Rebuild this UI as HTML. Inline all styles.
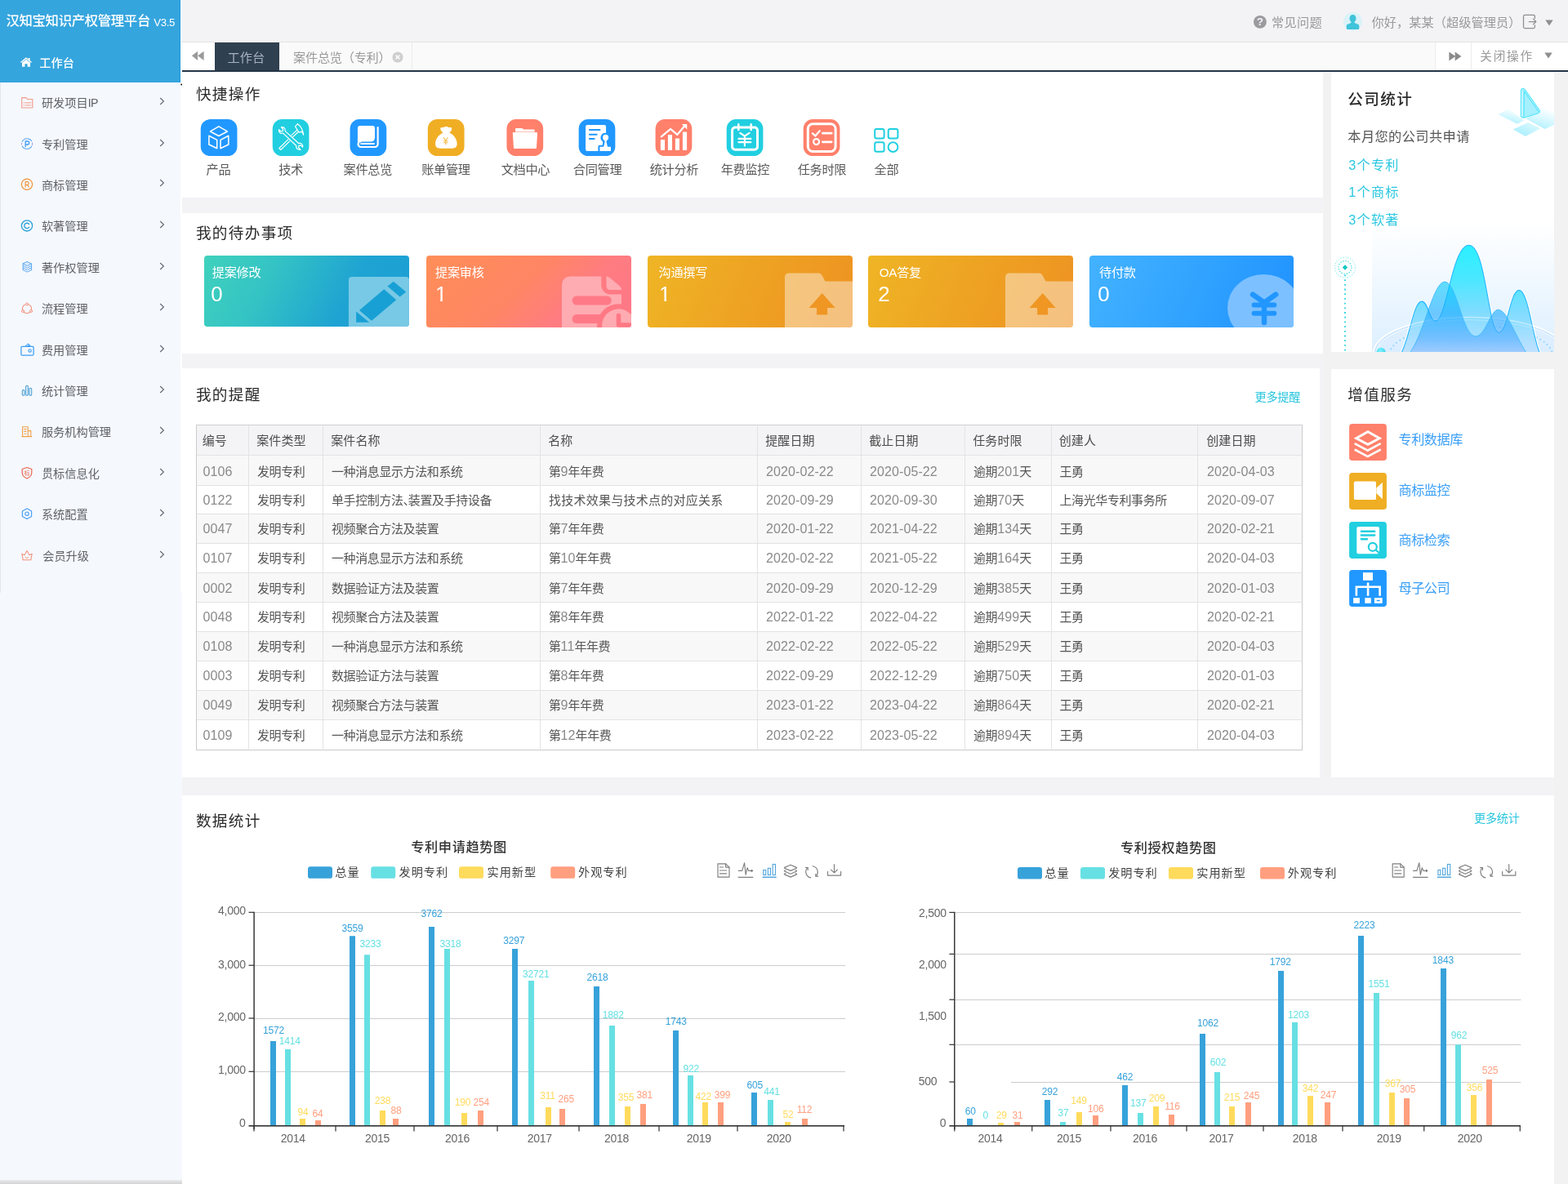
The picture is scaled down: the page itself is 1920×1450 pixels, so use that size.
<!DOCTYPE html>
<html lang="zh-CN">
<head>
<meta charset="utf-8">
<title>汉知宝知识产权管理平台 V3.5</title>
<style>
html,body{margin:0;padding:0}
body{width:1920px;height:1450px;overflow:hidden;background:#f2f2f3;position:relative;}
#app{position:absolute;left:0;top:0;width:1920px;height:1450px;overflow:hidden;will-change:transform;font-family:"Liberation Sans","Noto Sans CJK SC",sans-serif;color:#555;font-size:14px}
.a{position:absolute}
.t{position:absolute;white-space:nowrap;line-height:1;margin:0;padding:0;font-weight:400}
svg{position:absolute;overflow:visible}
ul{list-style:none;margin:0;padding:0}
a{text-decoration:none;color:inherit}
h1,h2,h3,p{margin:0;padding:0;font-weight:400}

.tb{border-collapse:separate;border-spacing:0;table-layout:fixed;border-left:1px solid #cbcbcb;border-top:1px solid #cfcfcf;font-size:15px;color:#555;box-sizing:border-box}
.tb th,.tb td{box-sizing:border-box;border-right:1px solid #e3e3e3;border-bottom:1px solid #e3e3e3;padding:0 0 0 10px;text-align:left;font-weight:400;white-space:nowrap;overflow:hidden;line-height:20px;letter-spacing:-0.400px}
.tb th{background:#f4f4f6;color:#4d4d4d;letter-spacing:0.100px;padding-top:2px;text-indent:-0.800px}
.tb td{padding-top:3px}
.tb tr.odd td{background:#f8f8f9}
.tb th:last-child,.tb td:last-child{border-right:1px solid #cbcbcb}
.tb tbody tr:last-child td{border-bottom:1px solid #cbcbcb}
.tb .n{font-size:16px;color:#8a8a8a;letter-spacing:0.100px}
</style>
</head>
<body>
<div id="app">
<nav class="a" style="left:0;top:0;width:223px;height:1450px">
<div class="a" style="left:0px;top:0px;width:221px;height:726px;background:#f5f8fd;"></div>
<div class="a" style="left:221px;top:0px;width:2px;height:726px;background:#fff;"></div>
<div class="a" style="left:0px;top:726px;width:223px;height:724px;background:#f5f8fd;"></div>
<div class="a" style="left:0px;top:101px;width:1px;height:625px;background:#e3e8f0;"></div>
<div class="a" style="left:0px;top:1445px;width:223px;height:5px;background:linear-gradient(#e9ebee,#d2d2d2);"></div>
<div class="a" style="left:0px;top:0px;width:221px;height:101px;background:#35a5de;"></div>
<div class="a" style="left:220px;top:0px;width:1px;height:101px;background:#2198da;"></div>
<svg class="a" style="left:221px;top:102px" width="4" height="4" viewBox="0 0 4 4" ><g><circle cx="1.150" cy="1.550" r=".95" fill="#111"/></g></svg>
<h1 class="t" style="left:7.5px;top:17.30px;font-size:16.4px;color:#fff;letter-spacing:-0.35px;font-weight:500;">汉知宝知识产权管理平台 <span style="font-size:13.200px;letter-spacing:-0.300px;position:relative;top:0.500px;font-weight:400">V3.5</span></h1>
<svg class="a" style="left:24px;top:69px" width="16" height="14" viewBox="0 0 16 14"><path d="M8 1.2L1 7.1l.8.9L8 2.900l6.200 5.100.800-.900-2.400-2V2h-1.800v1.600z" fill="#fff"/><path d="M3 7.700L8 3.700l5 4v5.100H9.600V9.300H6.400v3.500H3z" fill="#fff"/></svg>
<a class="t" style="left:48.3px;top:70.20px;font-size:14.2px;color:#fff;font-weight:500;">工作台</a>
<ul>
<li>
<svg class="a" style="left:25px;top:117px" width="18" height="18" viewBox="0 0 18 18" fill="none" stroke-linecap="round" stroke-linejoin="round"><g transform="translate(0.00 0.20)"><path d="M1.700 2.400h5.400l1.600 1.900h6.100v10.500H1.700z" stroke="#f4978a" stroke-width="1.100" fill="none"/><path d="M4.100 8.700h.9M6.600 8.700h6M4.100 11.600h.9M6.600 11.600h6" stroke="#f5a99c" stroke-width="1.200"/></g></svg>
<a class="t" style="left:50.9px;top:118.90px;font-size:14.2px;color:#606266;">研发项目<span style="letter-spacing:-0.700px">IP</span></a>
<svg class="a" style="left:194px;top:117.8px" width="10" height="12" viewBox="0 0 10 12"><path d="M2.200 2l4.200 4-4.200 4" fill="none" stroke="#5f6675" stroke-width="1.1"/></svg>
</li>
<li>
<svg class="a" style="left:25px;top:168px" width="18" height="18" viewBox="0 0 18 18" fill="none" stroke-linecap="round" stroke-linejoin="round"><g transform="translate(0.00 0.20)"><path d="M13.6 4.4A6.6 6.6 0 0 0 2.2 5.2M2.2 10.8a6.6 6.6 0 0 0 11.6 0" stroke="#5aa9f6" stroke-width="1.1"/><path d="M1.6 7.2v1.6M14.6 6.6v2.6" stroke="#8e9bf0" stroke-width="1"/><path d="M6.2 11.4V4.8h2.5a2 2 0 0 1 0 4H6.2" stroke="#3f9cf4" stroke-width="1.3"/></g></svg>
<a class="t" style="left:50.9px;top:169.90px;font-size:14.2px;color:#606266;">专利管理</a>
<svg class="a" style="left:194px;top:168.8px" width="10" height="12" viewBox="0 0 10 12"><path d="M2.200 2l4.200 4-4.200 4" fill="none" stroke="#5f6675" stroke-width="1.1"/></svg>
</li>
<li>
<svg class="a" style="left:25px;top:217px" width="18" height="18" viewBox="0 0 18 18" fill="none" stroke-linecap="round" stroke-linejoin="round"><g transform="translate(0.00 0.80)"><circle cx="8" cy="8" r="6.6" stroke="#f0953d" stroke-width="1.2"/><path d="M6.1 11.2V4.9h2.3a1.8 1.8 0 0 1 0 3.6H6.1M8.4 8.5l1.9 2.7" stroke="#f0953d" stroke-width="1.2"/></g></svg>
<a class="t" style="left:50.9px;top:219.50px;font-size:14.2px;color:#606266;">商标管理</a>
<svg class="a" style="left:194px;top:218.4px" width="10" height="12" viewBox="0 0 10 12"><path d="M2.200 2l4.200 4-4.200 4" fill="none" stroke="#5f6675" stroke-width="1.1"/></svg>
</li>
<li>
<svg class="a" style="left:25px;top:268px" width="18" height="18" viewBox="0 0 18 18" fill="none" stroke-linecap="round" stroke-linejoin="round"><g transform="translate(0.00 0.40)"><circle cx="8" cy="8" r="6.6" stroke="#2a9fd8" stroke-width="1.3"/><path d="M10.6 6.1a3.2 3.2 0 1 0 0 3.8" stroke="#2a9fd8" stroke-width="1.4"/></g></svg>
<a class="t" style="left:50.9px;top:270.10px;font-size:14.2px;color:#606266;">软著管理</a>
<svg class="a" style="left:194px;top:269px" width="10" height="12" viewBox="0 0 10 12"><path d="M2.200 2l4.200 4-4.200 4" fill="none" stroke="#5f6675" stroke-width="1.1"/></svg>
</li>
<li>
<svg class="a" style="left:25px;top:318px" width="18" height="18" viewBox="0 0 18 18" fill="none" stroke-linecap="round" stroke-linejoin="round"><g transform="translate(0.00 0.90)"><path d="M8.400 1.700l5.200 2.500-5.200 2.500-5.200-2.500z" stroke="#5ea8f2" stroke-width="1" fill="#d9eafc"/><path d="M3.200 6.700l5.200 2.500 5.200-2.500M3.200 9.200l5.200 2.500 5.200-2.500M3.200 11.700l5.200 2.500 5.200-2.500M3.200 4.200v7.500M13.600 4.200v7.500" stroke="#5ea8f2" stroke-width="1"/></g></svg>
<a class="t" style="left:50.9px;top:320.60px;font-size:14.2px;color:#606266;">著作权管理</a>
<svg class="a" style="left:194px;top:319.5px" width="10" height="12" viewBox="0 0 10 12"><path d="M2.200 2l4.200 4-4.200 4" fill="none" stroke="#5f6675" stroke-width="1.1"/></svg>
</li>
<li>
<svg class="a" style="left:25px;top:369px" width="18" height="18" viewBox="0 0 18 18" fill="none" stroke-linecap="round" stroke-linejoin="round"><g transform="translate(0.00 0.50)"><circle cx="8" cy="8.6" r="5.6" stroke="#f3927f" stroke-width="1.1"/><circle cx="8" cy="2.9" r="1.5" fill="#f5f8fd" stroke="#f3927f" stroke-width="1"/><circle cx="3" cy="11.4" r="1.5" fill="#f5f8fd" stroke="#f3927f" stroke-width="1"/><circle cx="13" cy="11.4" r="1.5" fill="#f5f8fd" stroke="#f3927f" stroke-width="1"/></g></svg>
<a class="t" style="left:50.9px;top:371.20px;font-size:14.2px;color:#606266;">流程管理</a>
<svg class="a" style="left:194px;top:370.1px" width="10" height="12" viewBox="0 0 10 12"><path d="M2.200 2l4.200 4-4.200 4" fill="none" stroke="#5f6675" stroke-width="1.1"/></svg>
</li>
<li>
<svg class="a" style="left:25px;top:420px" width="18" height="18" viewBox="0 0 18 18" fill="none" stroke-linecap="round" stroke-linejoin="round"><g transform="translate(0.00 0.20)"><path d="M5.600 4.200L9.400.900l3.200 3.300M8.200 4.200l3-2.100" stroke="#4aa6f6" stroke-width="1.100"/><rect x=".9" y="4.200" width="15.200" height="10.600" rx="1.200" stroke="#3a9ff5" stroke-width="1.250"/><circle cx="11.600" cy="9.200" r="1.700" stroke="#3a9ff5" stroke-width="1.100"/></g></svg>
<a class="t" style="left:50.9px;top:421.90px;font-size:14.2px;color:#606266;">费用管理</a>
<svg class="a" style="left:194px;top:420.8px" width="10" height="12" viewBox="0 0 10 12"><path d="M2.200 2l4.200 4-4.200 4" fill="none" stroke="#5f6675" stroke-width="1.1"/></svg>
</li>
<li>
<svg class="a" style="left:25px;top:470px" width="18" height="18" viewBox="0 0 18 18" fill="none" stroke-linecap="round" stroke-linejoin="round"><g transform="translate(0.00 0.20)"><rect x="2.3" y="7.4" width="2.7" height="6.6" rx="1.3" stroke="#4a9fd6" stroke-width="1.1"/><rect x="6.65" y="2" width="2.7" height="12" rx="1.3" stroke="#4a9fd6" stroke-width="1.1"/><rect x="11" y="5" width="2.7" height="9" rx="1.3" stroke="#4a9fd6" stroke-width="1.1"/></g></svg>
<a class="t" style="left:50.9px;top:471.90px;font-size:14.2px;color:#606266;">统计管理</a>
<svg class="a" style="left:194px;top:470.8px" width="10" height="12" viewBox="0 0 10 12"><path d="M2.200 2l4.200 4-4.200 4" fill="none" stroke="#5f6675" stroke-width="1.1"/></svg>
</li>
<li>
<svg class="a" style="left:25px;top:520px" width="18" height="18" viewBox="0 0 18 18" fill="none" stroke-linecap="round" stroke-linejoin="round"><g transform="translate(0.00 0.40)"><path d="M2.6 14V2.4h6.6V14M9.2 7.2h3.6V14M1.8 14.2h12" stroke="#f0a047" stroke-width="1.1"/><path d="M4.8 5.2h2.2M4.8 8h2.2M4.8 10.8h2.2" stroke="#f0a047" stroke-width="1.1"/></g></svg>
<a class="t" style="left:50.9px;top:522.10px;font-size:14.2px;color:#606266;">服务机构管理</a>
<svg class="a" style="left:194px;top:521px" width="10" height="12" viewBox="0 0 10 12"><path d="M2.200 2l4.200 4-4.200 4" fill="none" stroke="#5f6675" stroke-width="1.1"/></svg>
</li>
<li>
<svg class="a" style="left:25px;top:571px" width="18" height="18" viewBox="0 0 18 18" fill="none" stroke-linecap="round" stroke-linejoin="round"><g transform="translate(0.00 0.20)"><path d="M8 1.3l5.8 2v4.5c0 3.4-2.6 5.6-5.8 7-3.2-1.4-5.8-3.6-5.8-7V3.300z" stroke="#ea6650" stroke-width="1.2"/></g></svg>
<span class="t" style="left:29.4px;top:575.50px;font-size:7px;color:#ea6650;">标</span>
<a class="t" style="left:50.9px;top:572.90px;font-size:14.2px;color:#606266;">贯标信息化</a>
<svg class="a" style="left:194px;top:571.8px" width="10" height="12" viewBox="0 0 10 12"><path d="M2.200 2l4.200 4-4.200 4" fill="none" stroke="#5f6675" stroke-width="1.1"/></svg>
</li>
<li>
<svg class="a" style="left:25px;top:621px" width="18" height="18" viewBox="0 0 18 18" fill="none" stroke-linecap="round" stroke-linejoin="round"><g transform="translate(0.00 0.20)"><path d="M8 1.6l5.6 3.2v6.4L8 14.4l-5.6-3.2V4.8z" stroke="#4aa0f5" stroke-width="1.2"/><circle cx="8" cy="8" r="2.2" stroke="#4aa0f5" stroke-width="1.2"/></g></svg>
<a class="t" style="left:50.9px;top:622.90px;font-size:14.2px;color:#606266;">系统配置</a>
<svg class="a" style="left:194px;top:621.8px" width="10" height="12" viewBox="0 0 10 12"><path d="M2.200 2l4.200 4-4.200 4" fill="none" stroke="#5f6675" stroke-width="1.1"/></svg>
</li>
<li>
<svg class="a" style="left:25px;top:672px" width="18" height="17" viewBox="0 0 18 17" fill="none" stroke-linecap="round" stroke-linejoin="round"><g><path d="M1.8 6.2l3.2 1.6L8 2.6l3 5.200 3.200-1.600-1.400 7.600H3.200z" stroke="#f3937f" stroke-width="1.1"/><path d="M6.4 10.400l1.600 1.400 1.600-1.400" stroke="#f3937f" stroke-width="1"/></g></svg>
<a class="t" style="left:52.2px;top:673.70px;font-size:14.2px;color:#606266;">会员升级</a>
<svg class="a" style="left:194px;top:672.6px" width="10" height="12" viewBox="0 0 10 12"><path d="M2.200 2l4.200 4-4.200 4" fill="none" stroke="#5f6675" stroke-width="1.1"/></svg>
</li>
</ul></nav>
<header class="a" style="left:223px;top:0;width:1697px;height:88px">
</header>
<div class="a" style="left:223px;top:0px;width:1697px;height:51px;background:#f3f3f5;"></div>
<div class="a" style="left:223px;top:51px;width:1697px;height:1px;background:#e4e4e5;"></div>
<svg class="a" style="left:1534px;top:18px" width="18" height="18" viewBox="0 0 18 18" ><g transform="translate(0.90 0.90)"><circle cx="8" cy="8" r="7.900" fill="#9b9a9e"/></g></svg>
<span class="t" style="left:1538.8px;top:19.95px;font-size:13.5px;color:#f3f3f5;font-weight:700;">?</span>
<a class="t" style="left:1557.1px;top:19.60px;font-size:15.2px;color:#9a9a9c;letter-spacing:0.250px;">常见问题</a>
<svg class="a" style="left:1645px;top:14px" width="24" height="25" viewBox="0 0 24 25" ><g transform="translate(0.00 0.90)"><circle cx="11.500" cy="11.500" r="11.500" fill="#dbf3f8"/><path d="M11.500 3.100c2.400 0 4 1.900 4 4.600 0 1.900-.800 3.500-1.900 4.400-.300.300-.300.900.100 1.100l4 1.700c1 .400 1.600 1.100 1.600 2.100v2.600c0 .900-.600 1.500-1.500 1.500H5.200c-.900 0-1.500-.600-1.500-1.500v-2.600c0-1 .600-1.700 1.600-2.100l4-1.700c.400-.200.400-.800.100-1.100-1.100-.900-1.900-2.500-1.900-4.400 0-2.700 1.600-4.600 4-4.600z" fill="#3fc4db"/></g></svg>
<span class="t" style="left:1679.5px;top:19.60px;font-size:15.2px;color:#9a9a9c;letter-spacing:0.070px;">你好，某某（超级管理员）</span>
<svg class="a" style="left:1864px;top:17px" width="19" height="19" viewBox="1864 17 19 19" fill="none" stroke="#8f8f92" stroke-width="1.250" stroke-linejoin="round" stroke-linecap="round"><path d="M1879.400 22.400V19.900a1.500 1.500 0 0 0-1.500-1.500H1867a1.500 1.500 0 0 0-1.500 1.500v13.200a1.500 1.500 0 0 0 1.500 1.500h10.900a1.500 1.500 0 0 0 1.500-1.500V30.800"/><path d="M1872.300 26.500h8.200M1877.400 23.100l3.400 3.400-3.400 3.400"/></svg>
<svg class="a" style="left:1891.500px;top:23.500px" width="10" height="8" viewBox="0 0 10 8"><path d="M0.300 0.500h9.400L5 7.600z" fill="#8f8f92"/></svg>
<div class="a" style="left:223px;top:52px;width:1697px;height:34px;background:#fafafa;"></div>
<div class="a" style="left:223px;top:86px;width:1697px;height:2px;background:#243447;"></div>
<div class="a" style="left:223px;top:52px;width:40px;height:34px;background:#fff;"></div>
<svg class="a" style="left:234px;top:62px" width="17" height="13" viewBox="0 0 17 13"><path d="M8.100 0.700v11.200L0.900 6.300zM15.600 0.700v11.200L8.200 6.300z" fill="#9a9a9a"/></svg>
<div class="a" style="left:263px;top:52px;width:79px;height:34px;background:#2f4050;"></div>
<a class="t" style="left:278.5px;top:62.80px;font-size:15.2px;color:#a7b1c2;">工作台</a>
<a class="t" style="left:359.1px;top:62.80px;font-size:15.2px;color:#999;letter-spacing:-0.270px;">案件总览（专利）</a>
<svg class="a" style="left:479.500px;top:62.800px" width="14" height="14" viewBox="0 0 14 14"><circle cx="7" cy="7" r="6.600" fill="#cfcfcf"/><path d="M4.600 4.600l4.800 4.800M9.400 4.600l-4.800 4.800" stroke="#fafafa" stroke-width="1.500"/></svg>
<div class="a" style="left:504px;top:52px;width:1px;height:34px;background:#ececec;"></div>
<div class="a" style="left:1757px;top:52px;width:163px;height:34px;background:#fff;"></div>
<div class="a" style="left:1757px;top:52px;width:1px;height:34px;background:#ececec;"></div>
<div class="a" style="left:1801px;top:52px;width:1px;height:34px;background:#ececec;"></div>
<svg class="a" style="left:1773.500px;top:62.500px" width="16" height="12" viewBox="0 0 16 12"><path d="M0.400 0.400v11.200L8.200 6zM7.600 0.400v11.200L15.400 6z" fill="#8a8a8a"/></svg>
<a class="t" style="left:1812.3px;top:62.00px;font-size:14.6px;color:#999;letter-spacing:1.800px;">关闭操作</a>
<svg class="a" style="left:1891px;top:63.500px" width="10" height="8" viewBox="0 0 10 8"><path d="M0.300 0.500h9.400L5 7.600z" fill="#8f8f92"/></svg>
<main>
<div class="a" style="left:223px;top:88px;width:1397px;height:886px;background:#f3f3f6;"></div>
<div class="a" style="left:223px;top:952px;width:1680px;height:22px;background:#f3f3f5;"></div>
<section class="a" style="left:223px;top:88px;width:1397px;height:154px;background:#fff"></section>
<h2 class="t" style="left:239.9px;top:107.00px;font-size:18.6px;color:#2b2b2b;letter-spacing:1.350px;">快捷操作</h2>
<svg class="a" style="left:245px;top:146px" width="47" height="47" viewBox="0 0 47 47" fill="none" stroke-linecap="round" stroke-linejoin="round"><g transform="translate(0.75 0.10)"><rect x="0" y="0" width="44.700" height="45" rx="11.600" fill="#2198ff"/><g stroke="#fff" stroke-width="1.550"><path d="M22.100 8.700L32.600 14.850L22.100 20.400L11.750 14.850z"/><path d="M10.150 20.100L19.950 25.300V35.700L10.150 30.900z"/><path d="M34.050 20.100L24.250 25.300V35.700L34.050 30.900z"/></g></g></svg>
<a class="t" style="left:252.6px;top:199.90px;font-size:15.2px;color:#595959;letter-spacing:-0.300px;">产品</a>
<svg class="a" style="left:333px;top:146px" width="47" height="47" viewBox="0 0 47 47" fill="none" stroke-linecap="round" stroke-linejoin="round"><g transform="translate(0.75 0.10)"><rect x="0" y="0" width="44.700" height="45" rx="11.600" fill="#21cfe0"/><g stroke="#fff" stroke-width="1.150"><path transform="translate(22.500 22.500) scale(1.070) translate(-23.600 -21.900)" d="M14.400 16.600l15.300 14.600a3.400 3.400 0 0 0 1.300 3.600c1 .9 2.300 1.100 3.500.700l-2.300-2.300 .600-2.100 2.100-.600 2.100 2.200c.400-1.200 0-2.600-1-3.500a3.400 3.400 0 0 0-3.600-.800L16.900 14.200a3.400 3.400 0 0 0-.900-3.500c-1-.900-2.300-1.200-3.500-.800l2.200 2.300-.500 2-2.100.600-2.200-2.200c-.400 1.200-.100 2.500.900 3.400 1 .900 2.400 1.200 3.600.600z" fill="#21cfe0"/><path d="M19.100 24.800L8.100 35.400l1.900 2 11-10.600M25 21.600l6.900-6.700M23.200 19.600l6.800-6.600"/><path d="M27.700 8.800l3.100-3.200c3.600 2.700 6.300 7.200 7.100 13.600l-2-4.200-3.500 1.200z" fill="#21cfe0"/></g></g></svg>
<a class="t" style="left:341.2px;top:199.90px;font-size:15.2px;color:#595959;letter-spacing:-0.300px;">技术</a>
<svg class="a" style="left:428px;top:146px" width="47" height="47" viewBox="0 0 47 47" fill="none" stroke-linecap="round" stroke-linejoin="round"><g transform="translate(0.55 0.10)"><rect x="0" y="0" width="44.700" height="45" rx="11.600" fill="#2198ff"/><path d="M12.400 7.800h15.100a3 3 0 0 1 3 3v11.700a5 5 0 0 1-5 5H9.400V10.800a3 3 0 0 1 3-3z" fill="#fff" stroke="none"/><path d="M34.100 10v20.500a3.400 3.400 0 0 1-3.400 3.400H13.300a3.400 3.400 0 0 1 0-6.800" stroke="#fff" stroke-width="2.100"/><path d="M13.600 29.900h15.800" stroke="#fff" stroke-width="2"/><path d="M10.400 24v7" stroke="#fff" stroke-width="2"/></g></svg>
<a class="t" style="left:420.6px;top:199.90px;font-size:15.2px;color:#595959;letter-spacing:-0.300px;">案件总览</a>
<svg class="a" style="left:523px;top:146px" width="47" height="47" viewBox="0 0 47 47" fill="none" stroke-linecap="round" stroke-linejoin="round"><g transform="translate(0.85 0.10)"><rect x="0" y="0" width="44.700" height="45" rx="11.600" fill="#f0ae24"/><path d="M18.600 16.400c-1.400-1.400-3.400-3.200-3.200-5 .3-1.700 2.300-1.500 3.600-1.200 1-.900 2.200-1.400 3.400-1.400 1.300 0 2.400.500 3.400 1.400 1.300-.300 3.400-.500 3.600 1.200.200 1.800-1.500 3.600-2.900 5 5.600 2.800 9.300 8.200 9.300 13.600 0 3.800-2.300 5.700-5.700 5.700H14.900c-3.400 0-5.700-1.900-5.700-5.700 0-5.400 3.800-10.800 9.400-13.600z" fill="#fff" stroke="none"/><g stroke="#f3bd4e" stroke-width="1.100"><path d="M19.400 22.600l2.500 3.400 2.500-3.400M21.900 26v4.900M19.500 26.600h4.800M19.500 28.700h4.800"/></g></g></svg>
<a class="t" style="left:516.2px;top:199.90px;font-size:15.2px;color:#595959;letter-spacing:-0.300px;">账单管理</a>
<svg class="a" style="left:620px;top:146px" width="47" height="47" viewBox="0 0 47 47" fill="none" stroke-linecap="round" stroke-linejoin="round"><g transform="translate(0.45 0.10)"><rect x="0" y="0" width="44.700" height="45" rx="11.600" fill="#ff806b"/><path d="M10.600 11.600a.8.800 0 0 1 .8-.8h7.200l2.600 1.700h12.200a.8.800 0 0 1 .8.800v2.100H10.600z" fill="#fff" stroke="none"/><path d="M8.200 16h28.600a.8.800 0 0 1 .8.900l-1.100 18.100a.9.900 0 0 1-.9.900H9.400a.9.900 0 0 1-.9-.9L7.400 16.900a.8.800 0 0 1 .8-.9z" fill="#fff" stroke="none"/></g></svg>
<a class="t" style="left:613.7px;top:199.90px;font-size:15.2px;color:#595959;letter-spacing:-0.300px;">文档中心</a>
<svg class="a" style="left:708px;top:146px" width="47" height="47" viewBox="0 0 47 47" fill="none" stroke-linecap="round" stroke-linejoin="round"><g transform="translate(0.65 0.10)"><rect x="0" y="0" width="44.700" height="45" rx="11.600" fill="#2198ff"/><rect x="8.400" y="6.800" width="25" height="32" rx="2.200" fill="#fff" stroke="none"/><path d="M13.200 13h12.700M13.200 18.700h8.800M13.200 23.800h5.800" stroke="#2198ff" stroke-width="2"/><path d="M32.800 16.600a5.800 5.800 0 0 1 5.800 5.800c0 2-.9 3.600-2.100 4.600-.4.400-.6.900-.500 1.500l.6 3.200h2.700a2 2 0 0 1 2 2v7.100H23.700v-7.100a2 2 0 0 1 2-2h3.300l.6-3.200c.1-.6-.1-1.100-.5-1.500a5.800 5.800 0 0 1 3.700-10.400z" fill="#2198ff" stroke="none"/><path d="M32.800 18.700a3.700 3.700 0 0 1 3.700 3.700c0 1.400-.7 2.600-1.700 3.300-.7.500-1 1.300-.8 2.100l1.300 5.900h4v5.100H25.800v-5.100h4.800l1.300-5.900c.2-.8-.1-1.600-.8-2.100a3.900 3.900 0 0 1-1.700-3.300 3.700 3.700 0 0 1 3.400-3.700z" fill="#fff" stroke="none"/></g></svg>
<a class="t" style="left:701.8px;top:199.90px;font-size:15.2px;color:#595959;letter-spacing:-0.300px;">合同管理</a>
<svg class="a" style="left:802px;top:146px" width="47" height="47" viewBox="0 0 47 47" fill="none" stroke-linecap="round" stroke-linejoin="round"><g transform="translate(0.60 0.10)"><rect x="0" y="0" width="44.700" height="45" rx="11.600" fill="#ff806b"/><g fill="#fff" stroke="none"><rect x="6.250" y="24.800" width="5.200" height="13" rx=".6"/><rect x="15.300" y="18.900" width="5.100" height="18.900" rx=".6"/><rect x="24.300" y="23.400" width="5.100" height="14.400" rx=".6"/><rect x="33.300" y="15.400" width="5.200" height="22.400" rx=".6"/><path d="M32.200 5.800l6.400.200.100 6.400z"/></g><path d="M7.200 21.200l11.300-9.400 8.200 7 9.600-11.300" stroke="#fff" stroke-width="2.300" stroke-linejoin="miter"/></g></svg>
<a class="t" style="left:795.7px;top:199.90px;font-size:15.2px;color:#595959;letter-spacing:-0.300px;">统计分析</a>
<svg class="a" style="left:889px;top:146px" width="47" height="47" viewBox="0 0 47 47" fill="none" stroke-linecap="round" stroke-linejoin="round"><g transform="translate(0.70 0.10)"><rect x="0" y="0" width="44.700" height="45" rx="11.600" fill="#21cfe0"/><rect x="6.900" y="9.900" width="30.900" height="27.300" rx="3.600" stroke="#fff" stroke-width="3"/><path d="M14.600 6.300v6.600M30 6.300v6.600" stroke="#fff" stroke-width="2.600"/><g stroke="#fff" stroke-width="2.200"><path d="M16.600 16.700l5.600 3.800 5.700-3.800M22.200 20.600v11.800M14.800 23.800h14.800M14.800 28.100h14.800"/></g></g></svg>
<a class="t" style="left:882.7px;top:199.90px;font-size:15.2px;color:#595959;letter-spacing:-0.300px;">年费监控</a>
<svg class="a" style="left:983px;top:146px" width="47" height="47" viewBox="0 0 47 47" fill="none" stroke-linecap="round" stroke-linejoin="round"><g transform="translate(0.70 0.10)"><rect x="0" y="0" width="44.700" height="45" rx="11.600" fill="#ff806b"/><rect x="5.600" y="5.600" width="33.800" height="33.800" rx="6" stroke="#fff" stroke-width="3"/><g stroke="#fff"><path d="M11.200 17.200l3.500 3 5.400-6" stroke-width="2.300" stroke-linejoin="miter"/><path d="M23.600 17.100h11M23.600 27.700h11" stroke-width="2.700"/><circle cx="15.900" cy="27.500" r="3.500" stroke-width="2.200"/></g></g></svg>
<a class="t" style="left:976.7px;top:199.90px;font-size:15.2px;color:#595959;letter-spacing:-0.300px;">任务时限</a>
<svg class="a" style="left:1069px;top:156px" width="33" height="32" viewBox="0 0 33 32" fill="none" stroke="#1fcfe0" stroke-width="2"><rect x="2.200" y="2" width="11.400" height="11.500" rx="2.200"/><rect x="18.700" y="2" width="11.700" height="11.500" rx="2.200"/><rect x="2.200" y="18.200" width="11.400" height="11.500" rx="2.200"/><circle cx="24.500" cy="24.100" r="5.900"/></svg>
<a class="t" style="left:1070.6px;top:199.90px;font-size:15.2px;color:#595959;letter-spacing:-0.300px;">全部</a>
<section class="a" style="left:223px;top:260.500px;width:1397px;height:172px;background:#fff"></section>
<h2 class="t" style="left:239.9px;top:276.60px;font-size:18.6px;color:#2b2b2b;letter-spacing:1.350px;">我的待办事项</h2>
<div class="a" style="left:250px;top:313px;width:251px;height:87px;border-radius:4px;overflow:hidden;background:linear-gradient(118deg,#3fd1bd 0%,#35c4c4 30%,#1fa3d2 68%,#1b9fd5 100%)"><svg class="a" style="left:0;top:0" width="251" height="87" viewBox="250 313 251 87"><path d="M426.900 401V343.100a4 4 0 0 1 4-4H497a4 4 0 0 1 4 4V401z" fill="#78c9e5"/><path d="M440 380L470.300 354.250L485.300 367.200L455 392.800z" fill="#18a0d5"/><path d="M474.400 350.600L481.900 344.700L497.200 357.500L489.700 363.400z" fill="#18a0d5"/><path d="M436.100 381.600V394.700H452.200z" fill="#18a0d5"/></svg><h3 class="t" style="left:9.8px;top:12.60px;font-size:15.2px;color:#fff;letter-spacing:-0.300px;">提案修改</h3><span class="t" style="left:8.2px;top:35.10px;font-size:25.8px;color:#fff;">0</span></div>
<div class="a" style="left:522px;top:313px;width:250.5px;height:88px;border-radius:4px;overflow:hidden;background:linear-gradient(135deg,#ff8e58 0%,#ff8664 45%,#ff7c81 70%,#ff7689 100%)"><svg class="a" style="left:0;top:0" width="250.5" height="88" viewBox="522 313 250.5 88"><path d="M688 402V348.400a10 10 0 0 1 10-10H736.250V349a11.600 11.600 0 0 0 11.600 11.600H761V402z" fill="#ffabb2"/><path d="M742.500 338.400c1.600 0 2.900.600 4 1.500L759 350.400c1.300 1.100 2 2.500 2 4.600H747a4.500 4.500 0 0 1-4.500-4.500z" fill="#ffabb2"/><rect x="700.600" y="362.500" width="48.200" height="11" rx="5.500" fill="#ff7a86"/><rect x="700.600" y="385" width="48" height="11" rx="5.500" fill="#ff7a86"/><circle cx="757.500" cy="398.750" r="26.500" fill="#ff7985"/><circle cx="757.500" cy="398.750" r="20.400" fill="#ffabb2"/><path d="M757.500 386.600V398h13.600" stroke="#ff7985" stroke-width="5.600" fill="none" stroke-linecap="round" stroke-linejoin="round"/></svg><h3 class="t" style="left:11px;top:12.60px;font-size:15.2px;color:#fff;letter-spacing:-0.300px;">提案审核</h3><span class="t" style="left:10.9px;top:35.10px;font-size:25.8px;color:#fff;clip-path:polygon(0 0,100% 0,100% 18.500px,8.950px 18.500px,8.950px 100%,6.350px 100%,6.350px 18.500px,0 18.500px);">1</span></div>
<div class="a" style="left:793px;top:313px;width:250.5px;height:88px;border-radius:4px;overflow:hidden;background:linear-gradient(112deg,#efb525 0%,#eea423 45%,#ee9222 100%)"><svg class="a" style="left:0;top:0" width="250.5" height="88" viewBox="793 313 250.5 88"><path d="M961 339.400a5 5 0 0 1 5-5h36.600a4 4 0 0 1 3.500 2l4.400 8.200h40v62h-89.500z" fill="#fff" fill-opacity=".42"/><path d="M1006.7 359l16 18h-9.600v8.500h-13v-8.500h-9.500z" fill="#ef9623"/></svg><h3 class="t" style="left:13.5px;top:12.60px;font-size:15.2px;color:#fff;letter-spacing:-0.300px;">沟通撰写</h3><span class="t" style="left:14.1px;top:35.10px;font-size:25.8px;color:#fff;clip-path:polygon(0 0,100% 0,100% 18.500px,8.950px 18.500px,8.950px 100%,6.350px 100%,6.350px 18.500px,0 18.500px);">1</span></div>
<div class="a" style="left:1063px;top:313px;width:250.5px;height:88px;border-radius:4px;overflow:hidden;background:linear-gradient(112deg,#efb525 0%,#eea423 45%,#ee9222 100%)"><svg class="a" style="left:0;top:0" width="250.5" height="88" viewBox="1063 313 250.5 88"><path d="M1231 339.400a5 5 0 0 1 5-5h36.600a4 4 0 0 1 3.500 2l4.400 8.200h40v62h-89.500z" fill="#fff" fill-opacity=".42"/><path d="M1276.7 359l16 18h-9.600v8.500h-13v-8.500h-9.500z" fill="#ef9623"/></svg><h3 class="t" style="left:13.8px;top:12.60px;font-size:15.2px;color:#fff;letter-spacing:-0.300px;">OA答复</h3><span class="t" style="left:12.2px;top:35.10px;font-size:25.8px;color:#fff;">2</span></div>
<div class="a" style="left:1334px;top:313px;width:250px;height:88px;border-radius:4px;overflow:hidden;background:linear-gradient(115deg,#43b2ff 0%,#33a5ff 45%,#1f91ff 100%)"><svg class="a" style="left:0;top:0" width="250" height="88" viewBox="1334 313 250 88"><ellipse cx="1547.500" cy="377" rx="44.500" ry="41" fill="#7cc0ff"/><g stroke="#2196ff" stroke-linecap="round" fill="none"><path d="M1534 360.600l14 10 14.200-10M1548 370.600V395" stroke-width="6.400"/><path d="M1535.600 373.400h24.700M1535.600 383.750h24.700" stroke-width="6"/></g></svg><h3 class="t" style="left:12px;top:12.60px;font-size:15.2px;color:#fff;letter-spacing:-0.300px;">待付款</h3><span class="t" style="left:10.2px;top:35.10px;font-size:25.8px;color:#fff;">0</span></div>
<section class="a" style="left:223px;top:451px;width:1392.500px;height:501px;background:#fff"></section>
<h2 class="t" style="left:239.9px;top:475.10px;font-size:18.6px;color:#2b2b2b;letter-spacing:1.350px;">我的提醒</h2>
<a class="t" style="left:1536.4px;top:479.40px;font-size:14.2px;color:#2ac6de;letter-spacing:-0.200px;">更多提醒</a>
<table class="a tb" style="left:240px;top:520px;width:1355px">
<colgroup><col style="width:64px"><col style="width:91px"><col style="width:266px"><col style="width:266px"><col style="width:127px"><col style="width:127px"><col style="width:106px"><col style="width:179px"><col style="width:128px"></colgroup>
<thead><tr style="height:37px"><th style="padding-left:7.5px">编号</th><th style="padding-left:10px">案件类型</th><th style="padding-left:10px">案件名称</th><th style="padding-left:10px">名称</th><th style="padding-left:10px">提醒日期</th><th style="padding-left:10px">截止日期</th><th style="padding-left:10px">任务时限</th><th style="padding-left:9.5px">创建人</th><th style="padding-left:11px">创建日期</th></tr></thead><tbody>
<tr class="odd" style="height:37px"><td style="padding:3px 0 0 7.5px"><span class="n">0106</span></td><td style="padding:3px 0 0 10px">发明专利</td><td style="padding:3px 0 0 10px">一种消息显示方法和系统</td><td style="padding:3px 0 0 10px">第<span class="n">9</span>年年费</td><td style="padding:3px 0 0 10px"><span class="n">2020-02-22</span></td><td style="padding:3px 0 0 10px"><span class="n">2020-05-22</span></td><td style="padding:3px 0 0 10px">逾期<span class="n">201</span>天</td><td style="padding:3px 0 0 9.5px">王勇</td><td style="padding:3px 0 0 11px"><span class="n">2020-04-03</span></td></tr>
<tr style="height:35px"><td style="padding:1px 0 0 7.5px"><span class="n">0122</span></td><td style="padding:1px 0 0 10px">发明专利</td><td style="padding:1px 0 0 10px">单手控制方法<span style="margin-right:-8.400px">、</span>装置及手持设备</td><td style="padding:1px 0 0 10px"><span style="letter-spacing:0.250px">找技术效果与技术点的对应关系</span></td><td style="padding:1px 0 0 10px"><span class="n">2020-09-29</span></td><td style="padding:1px 0 0 10px"><span class="n">2020-09-30</span></td><td style="padding:1px 0 0 10px">逾期<span class="n">70</span>天</td><td style="padding:1px 0 0 9.5px">上海光华专利事务所</td><td style="padding:1px 0 0 11px"><span class="n">2020-09-07</span></td></tr>
<tr class="odd" style="height:36px"><td style="padding:1px 0 0 7.5px"><span class="n">0047</span></td><td style="padding:1px 0 0 10px">发明专利</td><td style="padding:1px 0 0 10px">视频聚合方法及装置</td><td style="padding:1px 0 0 10px">第<span class="n">7</span>年年费</td><td style="padding:1px 0 0 10px"><span class="n">2020-01-22</span></td><td style="padding:1px 0 0 10px"><span class="n">2021-04-22</span></td><td style="padding:1px 0 0 10px">逾期<span class="n">134</span>天</td><td style="padding:1px 0 0 9.5px">王勇</td><td style="padding:1px 0 0 11px"><span class="n">2020-02-21</span></td></tr>
<tr style="height:36px"><td style="padding:1px 0 0 7.5px"><span class="n">0107</span></td><td style="padding:1px 0 0 10px">发明专利</td><td style="padding:1px 0 0 10px">一种消息显示方法和系统</td><td style="padding:1px 0 0 10px">第<span class="n">10</span>年年费</td><td style="padding:1px 0 0 10px"><span class="n">2020-02-22</span></td><td style="padding:1px 0 0 10px"><span class="n">2021-05-22</span></td><td style="padding:1px 0 0 10px">逾期<span class="n">164</span>天</td><td style="padding:1px 0 0 9.5px">王勇</td><td style="padding:1px 0 0 11px"><span class="n">2020-04-03</span></td></tr>
<tr class="odd" style="height:36px"><td style="padding:3px 0 0 7.5px"><span class="n">0002</span></td><td style="padding:3px 0 0 10px">发明专利</td><td style="padding:3px 0 0 10px">数据验证方法及装置</td><td style="padding:3px 0 0 10px">第<span class="n">7</span>年年费</td><td style="padding:3px 0 0 10px"><span class="n">2020-09-29</span></td><td style="padding:3px 0 0 10px"><span class="n">2020-12-29</span></td><td style="padding:3px 0 0 10px">逾期<span class="n">385</span>天</td><td style="padding:3px 0 0 9.5px">王勇</td><td style="padding:3px 0 0 11px"><span class="n">2020-01-03</span></td></tr>
<tr style="height:36px"><td style="padding:1px 0 0 7.5px"><span class="n">0048</span></td><td style="padding:1px 0 0 10px">发明专利</td><td style="padding:1px 0 0 10px">视频聚合方法及装置</td><td style="padding:1px 0 0 10px">第<span class="n">8</span>年年费</td><td style="padding:1px 0 0 10px"><span class="n">2022-01-22</span></td><td style="padding:1px 0 0 10px"><span class="n">2022-04-22</span></td><td style="padding:1px 0 0 10px">逾期<span class="n">499</span>天</td><td style="padding:1px 0 0 9.5px">王勇</td><td style="padding:1px 0 0 11px"><span class="n">2020-02-21</span></td></tr>
<tr class="odd" style="height:36px"><td style="padding:1px 0 0 7.5px"><span class="n">0108</span></td><td style="padding:1px 0 0 10px">发明专利</td><td style="padding:1px 0 0 10px">一种消息显示方法和系统</td><td style="padding:1px 0 0 10px">第<span class="n">11</span>年年费</td><td style="padding:1px 0 0 10px"><span class="n">2022-02-22</span></td><td style="padding:1px 0 0 10px"><span class="n">2022-05-22</span></td><td style="padding:1px 0 0 10px">逾期<span class="n">529</span>天</td><td style="padding:1px 0 0 9.5px">王勇</td><td style="padding:1px 0 0 11px"><span class="n">2020-04-03</span></td></tr>
<tr style="height:36px"><td style="padding:1px 0 0 7.5px"><span class="n">0003</span></td><td style="padding:1px 0 0 10px">发明专利</td><td style="padding:1px 0 0 10px">数据验证方法与装置</td><td style="padding:1px 0 0 10px">第<span class="n">8</span>年年费</td><td style="padding:1px 0 0 10px"><span class="n">2022-09-29</span></td><td style="padding:1px 0 0 10px"><span class="n">2022-12-29</span></td><td style="padding:1px 0 0 10px">逾期<span class="n">750</span>天</td><td style="padding:1px 0 0 9.5px">王勇</td><td style="padding:1px 0 0 11px"><span class="n">2020-01-03</span></td></tr>
<tr class="odd" style="height:36px"><td style="padding:1px 0 0 7.5px"><span class="n">0049</span></td><td style="padding:1px 0 0 10px">发明专利</td><td style="padding:1px 0 0 10px">视频聚合方法与装置</td><td style="padding:1px 0 0 10px">第<span class="n">9</span>年年费</td><td style="padding:1px 0 0 10px"><span class="n">2023-01-22</span></td><td style="padding:1px 0 0 10px"><span class="n">2023-04-22</span></td><td style="padding:1px 0 0 10px">逾期<span class="n">864</span>天</td><td style="padding:1px 0 0 9.5px">王勇</td><td style="padding:1px 0 0 11px"><span class="n">2020-02-21</span></td></tr>
<tr style="height:37px"><td style="padding:2px 0 0 7.5px"><span class="n">0109</span></td><td style="padding:2px 0 0 10px">发明专利</td><td style="padding:2px 0 0 10px">一种消息显示方法和系统</td><td style="padding:2px 0 0 10px">第<span class="n">12</span>年年费</td><td style="padding:2px 0 0 10px"><span class="n">2023-02-22</span></td><td style="padding:2px 0 0 10px"><span class="n">2023-05-22</span></td><td style="padding:2px 0 0 10px">逾期<span class="n">894</span>天</td><td style="padding:2px 0 0 9.5px">王勇</td><td style="padding:2px 0 0 11px"><span class="n">2020-04-03</span></td></tr>
</tbody></table>
<aside class="a" style="left:1630px;top:88px;width:273px;height:343px;background:#fff;overflow:hidden">
<svg class="a" style="left:0;top:0" width="273" height="343" viewBox="1630 88 273 343"><defs><linearGradient id="bgm" x1="0" y1="0" x2="0" y2="1"><stop offset="0" stop-color="#fff"/><stop offset=".3" stop-color="#f6fbff"/><stop offset="1" stop-color="#dcefff"/></linearGradient><linearGradient id="m1" gradientUnits="userSpaceOnUse" x1="0" y1="300" x2="0" y2="431"><stop offset="0" stop-color="#2af0ff"/><stop offset=".3" stop-color="#48e8ff"/><stop offset=".62" stop-color="#7fdcff"/><stop offset="1" stop-color="#bfe1ff"/></linearGradient><linearGradient id="m2" gradientUnits="userSpaceOnUse" x1="0" y1="345" x2="0" y2="431"><stop offset="0" stop-color="#00ccfa"/><stop offset=".45" stop-color="#1aa9ff"/><stop offset=".8" stop-color="#4faaff"/><stop offset="1" stop-color="#86bcff"/></linearGradient><linearGradient id="tl" x1="0.7" y1="0" x2="0.3" y2="1"><stop offset="0" stop-color="#c9f6ff" stop-opacity="0"/><stop offset=".55" stop-color="#c4f5ff" stop-opacity=".75"/><stop offset="1" stop-color="#a6eefd"/></linearGradient><linearGradient id="tb" x1="1" y1="0" x2="0" y2="1"><stop offset="0" stop-color="#e6fbff"/><stop offset="1" stop-color="#9eecfd"/></linearGradient><radialGradient id="ball" cx=".4" cy=".3" r=".8"><stop offset="0" stop-color="#7ff3ff"/><stop offset="1" stop-color="#1fc9e6"/></radialGradient></defs><rect x="1680" y="270" width="223" height="161.500" fill="url(#bgm)"/><ellipse cx="1800" cy="432" rx="118" ry="43.600" fill="#d9ecff" fill-opacity=".5" stroke="#fff" stroke-width="1.800"/><ellipse cx="1800" cy="432" rx="116.200" ry="42" fill="none" stroke="#b5dcff" stroke-width=".8"/><ellipse cx="1800" cy="432" rx="114.600" ry="40.600" fill="none" stroke="#fff" stroke-opacity=".8" stroke-width=".9"/><ellipse cx="1801" cy="435" rx="100" ry="36.600" fill="none" stroke="#8fd4ff" stroke-width="1.900" stroke-dasharray="0.100 5.100" stroke-linecap="round"/><path d="M1716.300 431.500C1727 410 1731 369.100 1740.900 369.100C1749 369.100 1750 393.100 1757.900 393.100C1771 393.100 1778 300.300 1798.600 300.300C1820 300.300 1822 407.200 1835.300 407.200C1846 407.200 1849 355.400 1860.100 355.400C1871 355.400 1876 410 1885.100 431.500Z" fill="#fff" stroke="#fff" stroke-width="3.400" stroke-linejoin="round"/><path d="M1716.300 431.500C1727 410 1731 369.100 1740.900 369.100C1749 369.100 1750 393.100 1757.900 393.100C1771 393.100 1778 300.300 1798.600 300.300C1820 300.300 1822 407.200 1835.300 407.200C1846 407.200 1849 355.400 1860.100 355.400C1871 355.400 1876 410 1885.100 431.500Z" fill="url(#m1)"/><path d="M1716.300 431.500C1727 410 1731 369.100 1740.900 369.100C1749 369.100 1750 393.100 1757.900 393.100C1771 393.100 1778 300.300 1798.600 300.300C1820 300.300 1822 407.200 1835.300 407.200C1846 407.200 1849 355.400 1860.100 355.400C1871 355.400 1876 410 1885.100 431.500" fill="none" stroke="#27b6ff" stroke-width="1.100"/><path d="M1716 401.400A118 43.600 0 0 1 1885 401.800" fill="none" stroke="#fff" stroke-opacity=".45" stroke-width="1.600"/><path d="M1722 402.600A114.600 40.600 0 0 1 1879 403" fill="none" stroke="#fff" stroke-opacity=".3" stroke-width=".9"/><path d="M1726.900 431.500C1745 405 1755 345.100 1769.100 345.100C1784 345.100 1791 411.900 1806.800 411.900C1819 411.900 1825 379.300 1834.500 379.300C1845 379.300 1855 410 1868.700 431.500Z" fill="url(#m2)" fill-opacity=".6"/><path d="M1726.900 431.500C1745 405 1755 345.100 1769.100 345.100C1784 345.100 1791 411.900 1806.800 411.900C1819 411.900 1825 379.300 1834.500 379.300C1845 379.300 1855 410 1868.700 431.500" fill="none" stroke="#3ab8ff" stroke-opacity=".9" stroke-width=".9"/><path d="M1647 336.500V431" stroke="#23d4e0" stroke-width="1.800" stroke-dasharray="1.800 3.900" fill="none"/><circle cx="1647" cy="327.500" r="8" fill="none" stroke="#4fdcdc" stroke-width="1.200" stroke-dasharray="1.500 1.650"/><circle cx="1647" cy="327.500" r="12.500" fill="none" stroke="#8ae8e8" stroke-width="1.100" stroke-dasharray="1.200 1.900"/><path d="M1647 324.300l3.200 3.200-3.200 3.200-3.200-3.200z" fill="#14c7c4"/><circle cx="1691.100" cy="431.400" r="5.600" fill="url(#ball)"/><path d="M1834.500 140L1847 133.500L1866 147.400L1857.800 151.800Z" fill="url(#tl)"/><path d="M1868.300 145.200L1890 132L1903 138V152.700L1891.600 158Z" fill="url(#tl)"/><path d="M1852.800 158.600L1871 149.900L1886.400 157.300L1868 167Z" fill="url(#tb)"/><path d="M1862.400 110.500a2.600 2.600 0 0 1 4.600-1.300l18 25.500a2.600 2.600 0 0 1-1.300 4l-18 5.600a2.600 2.600 0 0 1-3.400-2.500z" fill="#a6f0fd" stroke="#45e3ff" stroke-width="1"/><path d="M1866.200 111.500l-.2 32.300M1866.200 111.500l17.800 25.500" stroke="#45e3ff" stroke-width="1" fill="none"/><path d="M1863.800 111.200v31" stroke="#fff" stroke-opacity=".55" stroke-width="1.400"/></svg>
<h2 class="t" style="left:20.3px;top:24.70px;font-size:18.6px;color:#2b2b2b;letter-spacing:1.350px;font-weight:500;">公司统计</h2>
<p class="t" style="left:20.3px;top:70.90px;font-size:16.2px;color:#555;letter-spacing:0.420px;">本月您的公司共申请</p>
<a class="t" style="left:21.2px;top:105.90px;font-size:16.2px;color:#2cc7e0;letter-spacing:1.250px;">3个专利</a>
<a class="t" style="left:21.2px;top:139.10px;font-size:16.2px;color:#2cc7e0;letter-spacing:1.250px;">1个商标</a>
<a class="t" style="left:21.2px;top:172.50px;font-size:16.2px;color:#2cc7e0;letter-spacing:1.250px;">3个软著</a>
</aside>
<aside class="a" style="left:1630px;top:452px;width:273px;height:500px;background:#fff"></aside>
<h2 class="t" style="left:1650.3px;top:475.40px;font-size:18.6px;color:#2b2b2b;letter-spacing:1.350px;">增值服务</h2>
<ul>
<li><svg class="a" style="left:1652px;top:519px" width="48" height="46" viewBox="0 0 48 46" fill="none" stroke-linecap="butt" stroke-linejoin="miter"><g transform="translate(0.10 0.00)"><rect x="0" y="0" width="45.800" height="45" rx="3.800" fill="#ff806b"/><path d="M22.900 9.700l14.200 8.100-14.200 7.600-14.300-7.600z" stroke="#fff" stroke-width="3"/><path d="M6.600 24.100l16 8.600 16-8.600M6.600 31.500l16 8.600 16-8.600" stroke="#fff" stroke-width="2.600"/></g></svg><a class="t" style="left:1712.6px;top:530.30px;font-size:16.2px;color:#3a9ff7;letter-spacing:-0.550px;">专利数据库</a></li>
<li><svg class="a" style="left:1652px;top:579px" width="48" height="46" viewBox="0 0 48 46" fill="none" stroke-linecap="butt" stroke-linejoin="miter"><g transform="translate(0.10 0.00)"><rect x="0" y="0" width="45.800" height="45" rx="3.800" fill="#efae23"/><rect x="5.800" y="10.600" width="27.100" height="22.500" rx="1.600" fill="#fff"/><path d="M33.300 18.500l7.500-6.800v20.600l-7.500-7.100z" fill="#fff"/></g></svg><a class="t" style="left:1712.6px;top:591.60px;font-size:16.2px;color:#3a9ff7;letter-spacing:-0.550px;">商标监控</a></li>
<li><svg class="a" style="left:1652px;top:639px" width="48" height="46" viewBox="0 0 48 46" fill="none" stroke-linecap="butt" stroke-linejoin="miter"><g transform="translate(0.10 0.00)"><rect x="0" y="0" width="45.800" height="45" rx="3.800" fill="#21cfe0"/><rect x="9.200" y="6" width="27.700" height="33.200" rx="2" fill="#fff"/><path d="M14.800 11.700h16.300M14.800 16.400h16.300M14.800 21.200h7.100" stroke="#21cfe0" stroke-width="2.500" stroke-linecap="round"/><circle cx="28.700" cy="30.800" r="5" fill="#fff" stroke="#21cfe0" stroke-width="2.200"/><path d="M32.400 34.300l4.600 4" stroke="#21cfe0" stroke-width="2.400"/></g></svg><a class="t" style="left:1712.6px;top:652.70px;font-size:16.2px;color:#3a9ff7;letter-spacing:-0.550px;">商标检索</a></li>
<li><svg class="a" style="left:1652px;top:698px" width="48" height="46" viewBox="0 0 48 46" fill="none" stroke-linecap="butt" stroke-linejoin="miter"><g transform="translate(0.10 0.00)"><rect x="0" y="0" width="45.800" height="45" rx="3.800" fill="#2198ff"/><g fill="#fff"><rect x="16.900" y="3.100" width="12" height="9.700"/><rect x="5" y="34.200" width="7.800" height="6.600"/><rect x="19.200" y="34.200" width="7.500" height="6.600"/><rect x="30.800" y="34.200" width="9.800" height="6.600"/></g><path d="M23 15.400v16.300M8.800 31.700V20.800h28.700v10.900" stroke="#fff" stroke-width="2.600"/><path d="M33.600 37.500h4" stroke="#2198ff" stroke-width="1.400"/></g></svg><a class="t" style="left:1712.6px;top:712.30px;font-size:16.2px;color:#3a9ff7;letter-spacing:-0.550px;">母子公司</a></li>
</ul>
<section class="a" style="left:223px;top:974px;width:1680px;height:476px;background:#fff"></section>
<h2 class="t" style="left:239.9px;top:997.00px;font-size:18.6px;color:#2b2b2b;letter-spacing:1.350px;">数据统计</h2>
<a class="t" style="left:1804.9px;top:994.60px;font-size:14.2px;color:#2ac6de;letter-spacing:-0.200px;">更多统计</a>
<svg class="a" style="left:0;top:974px" width="1920" height="476" viewBox="0 974 1920 476" font-family='"Liberation Sans","Noto Sans CJK SC",sans-serif' shape-rendering="auto">
<rect x="311" y="1117" width="724" height="1" fill="#cdcdcd"/>
<rect x="311" y="1182" width="724" height="1" fill="#cdcdcd"/>
<rect x="311" y="1247" width="724" height="1" fill="#cdcdcd"/>
<rect x="311" y="1312" width="724" height="1" fill="#cdcdcd"/>
<g fill="#37a2da">
<rect x="331" y="1275" width="7" height="103.3"/>
<rect x="428" y="1146.25" width="7" height="232.05"/>
<rect x="525" y="1135" width="7" height="243.3"/>
<rect x="627" y="1162" width="7" height="216.3"/>
<rect x="727" y="1208" width="7" height="170.3"/>
<rect x="824" y="1262" width="7" height="116.3"/>
<rect x="920" y="1338" width="7" height="40.3"/>
</g>
<g fill="#37a2da" font-size="12" text-anchor="middle" letter-spacing="-0.150">
<text x="335" y="1266.05">1572</text>
<text x="431.6" y="1141.05">3559</text>
<text x="528.5" y="1123.05">3762</text>
<text x="629.25" y="1156.05">3297</text>
<text x="731.5" y="1201.00">2618</text>
<text x="827.75" y="1255.05">1743</text>
<text x="924.25" y="1332.80">605</text>
</g>
<g fill="#67e0e3">
<rect x="349" y="1285" width="7" height="93.3"/>
<rect x="446" y="1169.25" width="7" height="209.05"/>
<rect x="544" y="1162" width="7" height="216.3"/>
<rect x="647" y="1201" width="7" height="177.3"/>
<rect x="746" y="1256" width="7" height="122.3"/>
<rect x="842" y="1317" width="7" height="61.3"/>
<rect x="940" y="1347" width="7" height="31.3"/>
</g>
<g fill="#67e0e3" font-size="12" text-anchor="middle" letter-spacing="-0.150">
<text x="354.75" y="1279.05">1414</text>
<text x="453.6" y="1160.05">3233</text>
<text x="551.5" y="1160.05">3318</text>
<text x="656.25" y="1196.80">32721</text>
<text x="750.75" y="1246.80">1882</text>
<text x="846.25" y="1312.80">922</text>
<text x="945" y="1340.80">441</text>
</g>
<g fill="#ffdb5c">
<rect x="367" y="1370" width="7" height="8.3"/>
<rect x="465" y="1360" width="7" height="18.3"/>
<rect x="565" y="1363" width="7" height="15.3"/>
<rect x="668" y="1356" width="7" height="22.3"/>
<rect x="765" y="1355" width="7" height="23.3"/>
<rect x="860" y="1350" width="7" height="28.3"/>
<rect x="961" y="1374" width="7" height="4.3"/>
</g>
<g fill="#ffdb5c" font-size="12" text-anchor="middle" letter-spacing="-0.150">
<text x="371" y="1366.30">94</text>
<text x="468.5" y="1351.80">238</text>
<text x="566.5" y="1353.80">190</text>
<text x="670.5" y="1346.05">311</text>
<text x="766.5" y="1347.80">355</text>
<text x="861.25" y="1346.80">422</text>
<text x="965" y="1368.80">52</text>
</g>
<g fill="#ff9f7f">
<rect x="386" y="1372" width="7" height="6.3"/>
<rect x="481" y="1370" width="7" height="8.3"/>
<rect x="585" y="1360" width="7" height="18.3"/>
<rect x="685" y="1358" width="7" height="20.3"/>
<rect x="784" y="1352" width="7" height="26.3"/>
<rect x="879" y="1350" width="7" height="28.3"/>
<rect x="982" y="1370" width="7" height="8.3"/>
</g>
<g fill="#ff9f7f" font-size="12" text-anchor="middle" letter-spacing="-0.150">
<text x="389" y="1368.05">64</text>
<text x="485" y="1363.80">88</text>
<text x="589.25" y="1353.80">254</text>
<text x="693.25" y="1349.80">265</text>
<text x="789.25" y="1344.80">381</text>
<text x="884.5" y="1344.80">399</text>
<text x="985" y="1362.80">112</text>
</g>
<rect x="310.40" y="1116.8" width="1.400" height="266.200" fill="#2b2b2b"/>
<rect x="304.5" y="1378" width="729.5" height="1.600" fill="#333"/>
<rect x="304.5" y="1116.70" width="6.6" height="1.200" fill="#333"/>
<rect x="304.5" y="1181.60" width="6.6" height="1.200" fill="#333"/>
<rect x="304.5" y="1246.40" width="6.6" height="1.200" fill="#333"/>
<rect x="304.5" y="1311.70" width="6.6" height="1.200" fill="#333"/>
<rect x="310.40" y="1378" width="1.200" height="7.500" fill="#333"/>
<rect x="410.40" y="1378" width="1.200" height="7.500" fill="#333"/>
<rect x="506.40" y="1378" width="1.200" height="7.500" fill="#333"/>
<rect x="608.40" y="1378" width="1.200" height="7.500" fill="#333"/>
<rect x="708.40" y="1378" width="1.200" height="7.500" fill="#333"/>
<rect x="806.40" y="1378" width="1.200" height="7.500" fill="#333"/>
<rect x="902.40" y="1378" width="1.200" height="7.500" fill="#333"/>
<rect x="1032.40" y="1378" width="1.200" height="7.500" fill="#333"/>
<g font-size="14" fill="#666" letter-spacing="-0.25">
<text x="300.75" y="1120.20" text-anchor="end">4,000</text>
<text x="300.75" y="1185.60" text-anchor="end">3,000</text>
<text x="300.75" y="1249.80" text-anchor="end">2,000</text>
<text x="300.75" y="1315.20" text-anchor="end">1,000</text>
<text x="300.6" y="1380.40" text-anchor="end">0</text>
<text x="358.75" y="1399.25" text-anchor="middle">2014</text>
<text x="462" y="1399.25" text-anchor="middle">2015</text>
<text x="560" y="1399.25" text-anchor="middle">2016</text>
<text x="660.75" y="1399.25" text-anchor="middle">2017</text>
<text x="755" y="1399.25" text-anchor="middle">2018</text>
<text x="855.75" y="1399.25" text-anchor="middle">2019</text>
<text x="953.75" y="1399.25" text-anchor="middle">2020</text>
</g>
<rect x="377" y="1061.25" width="30" height="14.600" rx="3.200" fill="#37a2da"/>
<text x="410.3" y="1073.30" font-size="14.200" fill="#444" letter-spacing="0.950">总量</text>
<rect x="454.25" y="1061.25" width="30" height="14.600" rx="3.200" fill="#67e0e3"/>
<text x="488.5" y="1073.30" font-size="14.200" fill="#444" letter-spacing="0.950">发明专利</text>
<rect x="562" y="1061.25" width="30" height="14.600" rx="3.200" fill="#ffdb5c"/>
<text x="596.5" y="1073.30" font-size="14.200" fill="#444" letter-spacing="0.950">实用新型</text>
<rect x="674.2" y="1061.25" width="30" height="14.600" rx="3.200" fill="#ff9f7f"/>
<text x="708.1" y="1073.30" font-size="14.200" fill="#444" letter-spacing="0.950">外观专利</text>
<text x="503.3" y="1042.90" font-size="16.200" fill="#333" letter-spacing="0.600" font-weight="500">专利申请趋势图</text>
<g transform="translate(0 0)" fill="none" stroke="#7f7f7f" stroke-width="1.150" stroke-linejoin="round" stroke-linecap="round"><path d="M879 1057.800h9.600l4.400 4.300v12H879z"/><path d="M888.600 1057.800v4.300h4.400"/><path d="M881.400 1062h4.200M881.400 1066h8.200M881.400 1069.800h8.200"/><path d="M904.400 1066.400h4.300l2.900-9.700 1.500 14.600 2-8.600 1.500 3.700h4.200"/><path d="M920.300 1065.300l1.300 1.100-1.300 1.100z" fill="#7f7f7f"/><path d="M904.200 1074.300h17.700" stroke-width="1.300"/><g stroke="#56a8de" stroke-linejoin="miter"><rect x="934.700" y="1065.500" width="3" height="6"/><rect x="940.400" y="1063.300" width="3.100" height="8.200"/><rect x="946.200" y="1058.500" width="3.300" height="13"/><path d="M934.200 1074.200h16" stroke-width="1.500"/></g><path d="M968 1059.200l7.300 3.200c.5.200.5.600 0 .800L968 1066.400l-7.300-3.200c-.5-.200-.5-.600 0-.800z"/><path d="M961.800 1065.700l-1.100.500c-.5.200-.5.600 0 .800l7.300 3.200 7.300-3.200c.5-.200.5-.600 0-.800l-1.100-.500"/><path d="M961.800 1069.600l-1.100.500c-.5.200-.5.600 0 .800l7.300 3.200 7.300-3.200c.5-.200.5-.600 0-.800l-1.100-.500"/><path d="M988.900 1062.700A7.200 7.200 0 0 0 992.750 1074.900M995.250 1060.700A7.200 7.200 0 0 1 999.100 1072.900"/><path d="M986.300 1062.500h2.900v2.900M1001.700 1073.100h-2.900v-2.900"/><path d="M1021.500 1058.500v10.300M1017.600 1065.100l3.900 3.800 3.900-3.800"/><path d="M1013.500 1067.200v4.900h16.100v-4.900"/></g>
</svg>
<svg class="a" style="left:0;top:974px" width="1920" height="476" viewBox="0 974 1920 476" font-family='"Liberation Sans","Noto Sans CJK SC",sans-serif' shape-rendering="auto">
<rect x="1169" y="1117" width="693.3" height="1" fill="#cdcdcd"/>
<rect x="1169" y="1168" width="693.3" height="1" fill="#cdcdcd"/>
<rect x="1169" y="1224" width="693.3" height="1" fill="#cdcdcd"/>
<rect x="1169" y="1279" width="693.3" height="1" fill="#cdcdcd"/>
<rect x="1238" y="1325" width="624.3" height="1" fill="#cdcdcd"/>
<g fill="#37a2da">
<rect x="1184" y="1370" width="7" height="8.3"/>
<rect x="1279" y="1347" width="7" height="31.3"/>
<rect x="1374" y="1329" width="7" height="49.3"/>
<rect x="1469" y="1266" width="7" height="112.3"/>
<rect x="1565" y="1189" width="7" height="189.3"/>
<rect x="1663" y="1146" width="7" height="232.3"/>
<rect x="1764" y="1186" width="7" height="192.3"/>
</g>
<g fill="#37a2da" font-size="12" text-anchor="middle" letter-spacing="-0.150">
<text x="1188.25" y="1364.80">60</text>
<text x="1285.5" y="1341.05">292</text>
<text x="1377.5" y="1322.80">462</text>
<text x="1479" y="1257.05">1062</text>
<text x="1567.7" y="1182.30">1792</text>
<text x="1670.6" y="1137.30">2223</text>
<text x="1766.9" y="1179.90">1843</text>
</g>
<g fill="#67e0e3">
<rect x="1298" y="1374" width="7" height="4.3"/>
<rect x="1393" y="1363" width="7" height="15.3"/>
<rect x="1487" y="1313" width="7" height="65.3"/>
<rect x="1582" y="1252" width="7" height="126.3"/>
<rect x="1682" y="1216" width="7" height="162.3"/>
<rect x="1782" y="1279.25" width="7" height="99.05"/>
</g>
<g fill="#67e0e3" font-size="12" text-anchor="middle" letter-spacing="-0.150">
<text x="1206.75" y="1369.80">0</text>
<text x="1302" y="1367.05">37</text>
<text x="1393.75" y="1355.05">137</text>
<text x="1491.5" y="1305.05">602</text>
<text x="1590" y="1246.80">1203</text>
<text x="1688.5" y="1208.80">1551</text>
<text x="1786.5" y="1271.80">962</text>
</g>
<g fill="#ffdb5c">
<rect x="1222" y="1375" width="7" height="3.3"/>
<rect x="1318" y="1362" width="7" height="16.3"/>
<rect x="1412" y="1355" width="7" height="23.3"/>
<rect x="1505" y="1355" width="7" height="23.3"/>
<rect x="1601" y="1342" width="7" height="36.3"/>
<rect x="1701" y="1338" width="7" height="40.3"/>
<rect x="1801" y="1341" width="7" height="37.3"/>
</g>
<g fill="#ffdb5c" font-size="12" text-anchor="middle" letter-spacing="-0.150">
<text x="1226.25" y="1369.80">29</text>
<text x="1321" y="1351.80">149</text>
<text x="1416.5" y="1348.80">209</text>
<text x="1508.5" y="1348.05">215</text>
<text x="1604.5" y="1336.80">342</text>
<text x="1705.5" y="1330.80">367</text>
<text x="1805.5" y="1335.80">356</text>
</g>
<g fill="#ff9f7f">
<rect x="1242" y="1374" width="7" height="4.3"/>
<rect x="1338" y="1366" width="7" height="12.3"/>
<rect x="1431" y="1365" width="7" height="13.3"/>
<rect x="1525" y="1350" width="7" height="28.3"/>
<rect x="1622" y="1350" width="7" height="28.3"/>
<rect x="1719" y="1345" width="7" height="33.3"/>
<rect x="1820" y="1322" width="7" height="56.3"/>
</g>
<g fill="#ff9f7f" font-size="12" text-anchor="middle" letter-spacing="-0.150">
<text x="1246" y="1369.80">31</text>
<text x="1341.75" y="1361.80">106</text>
<text x="1435.5" y="1358.80">116</text>
<text x="1532.5" y="1346.05">245</text>
<text x="1626.5" y="1344.80">247</text>
<text x="1723.5" y="1337.80">305</text>
<text x="1824.5" y="1314.80">525</text>
</g>
<rect x="1168.10" y="1116.8" width="1.400" height="266.200" fill="#2b2b2b"/>
<rect x="1162.4" y="1378" width="699.3" height="1.600" fill="#333"/>
<rect x="1162.4" y="1116.80" width="6.4" height="1.200" fill="#333"/>
<rect x="1162.4" y="1167.80" width="6.4" height="1.200" fill="#333"/>
<rect x="1162.4" y="1223.60" width="6.4" height="1.200" fill="#333"/>
<rect x="1162.4" y="1278.70" width="6.4" height="1.200" fill="#333"/>
<rect x="1162.4" y="1324.40" width="6.4" height="1.200" fill="#333"/>
<rect x="1168.20" y="1378" width="1.200" height="7.500" fill="#333"/>
<rect x="1263.15" y="1378" width="1.200" height="7.500" fill="#333"/>
<rect x="1359.40" y="1378" width="1.200" height="7.500" fill="#333"/>
<rect x="1452.40" y="1378" width="1.200" height="7.500" fill="#333"/>
<rect x="1546.40" y="1378" width="1.200" height="7.500" fill="#333"/>
<rect x="1643.40" y="1378" width="1.200" height="7.500" fill="#333"/>
<rect x="1743.15" y="1378" width="1.200" height="7.500" fill="#333"/>
<rect x="1860.65" y="1378" width="1.200" height="7.500" fill="#333"/>
<g font-size="14" fill="#666" letter-spacing="-0.25">
<text x="1158.75" y="1122.90" text-anchor="end">2,500</text>
<text x="1158.75" y="1185.90" text-anchor="end">2,000</text>
<text x="1158.75" y="1249.10" text-anchor="end">1,500</text>
<text x="1124.8" y="1328.90" text-anchor="start">500</text>
<text x="1158.4" y="1380.10" text-anchor="end">0</text>
<text x="1212.5" y="1399.25" text-anchor="middle">2014</text>
<text x="1309" y="1399.25" text-anchor="middle">2015</text>
<text x="1402" y="1399.25" text-anchor="middle">2016</text>
<text x="1495.6" y="1399.25" text-anchor="middle">2017</text>
<text x="1597.75" y="1399.25" text-anchor="middle">2018</text>
<text x="1700.75" y="1399.25" text-anchor="middle">2019</text>
<text x="1799.75" y="1399.25" text-anchor="middle">2020</text>
</g>
<rect x="1246" y="1062" width="30" height="14.600" rx="3.200" fill="#37a2da"/>
<text x="1279.3" y="1074.40" font-size="14.200" fill="#444" letter-spacing="0.950">总量</text>
<rect x="1323" y="1062" width="30" height="14.600" rx="3.200" fill="#67e0e3"/>
<text x="1357.2" y="1074.40" font-size="14.200" fill="#444" letter-spacing="0.950">发明专利</text>
<rect x="1431" y="1062" width="30" height="14.600" rx="3.200" fill="#ffdb5c"/>
<text x="1465.3" y="1074.40" font-size="14.200" fill="#444" letter-spacing="0.950">实用新型</text>
<rect x="1543" y="1062" width="30" height="14.600" rx="3.200" fill="#ff9f7f"/>
<text x="1576.8" y="1074.40" font-size="14.200" fill="#444" letter-spacing="0.950">外观专利</text>
<text x="1372" y="1043.90" font-size="16.200" fill="#333" letter-spacing="0.600" font-weight="500">专利授权趋势图</text>
<g transform="translate(826.2 0)" fill="none" stroke="#7f7f7f" stroke-width="1.150" stroke-linejoin="round" stroke-linecap="round"><path d="M879 1057.800h9.600l4.400 4.300v12H879z"/><path d="M888.600 1057.800v4.300h4.400"/><path d="M881.400 1062h4.200M881.400 1066h8.200M881.400 1069.800h8.200"/><path d="M904.400 1066.400h4.300l2.900-9.700 1.500 14.600 2-8.600 1.500 3.700h4.200"/><path d="M920.300 1065.300l1.300 1.100-1.300 1.100z" fill="#7f7f7f"/><path d="M904.200 1074.300h17.700" stroke-width="1.300"/><g stroke="#56a8de" stroke-linejoin="miter"><rect x="934.700" y="1065.500" width="3" height="6"/><rect x="940.400" y="1063.300" width="3.100" height="8.200"/><rect x="946.200" y="1058.500" width="3.300" height="13"/><path d="M934.200 1074.200h16" stroke-width="1.500"/></g><path d="M968 1059.200l7.300 3.200c.5.200.5.600 0 .800L968 1066.400l-7.300-3.200c-.5-.200-.5-.600 0-.800z"/><path d="M961.800 1065.700l-1.100.500c-.5.200-.5.600 0 .800l7.300 3.200 7.300-3.200c.5-.200.5-.600 0-.800l-1.100-.500"/><path d="M961.800 1069.600l-1.100.500c-.5.200-.5.600 0 .800l7.300 3.200 7.300-3.200c.5-.200.5-.600 0-.800l-1.100-.500"/><path d="M988.900 1062.700A7.200 7.200 0 0 0 992.750 1074.900M995.250 1060.700A7.200 7.200 0 0 1 999.100 1072.900"/><path d="M986.300 1062.500h2.900v2.900M1001.700 1073.100h-2.900v-2.900"/><path d="M1021.500 1058.500v10.300M1017.600 1065.100l3.900 3.800 3.900-3.800"/><path d="M1013.500 1067.200v4.900h16.100v-4.900"/></g>
</svg>
</main>
</div>
</body>
</html>
